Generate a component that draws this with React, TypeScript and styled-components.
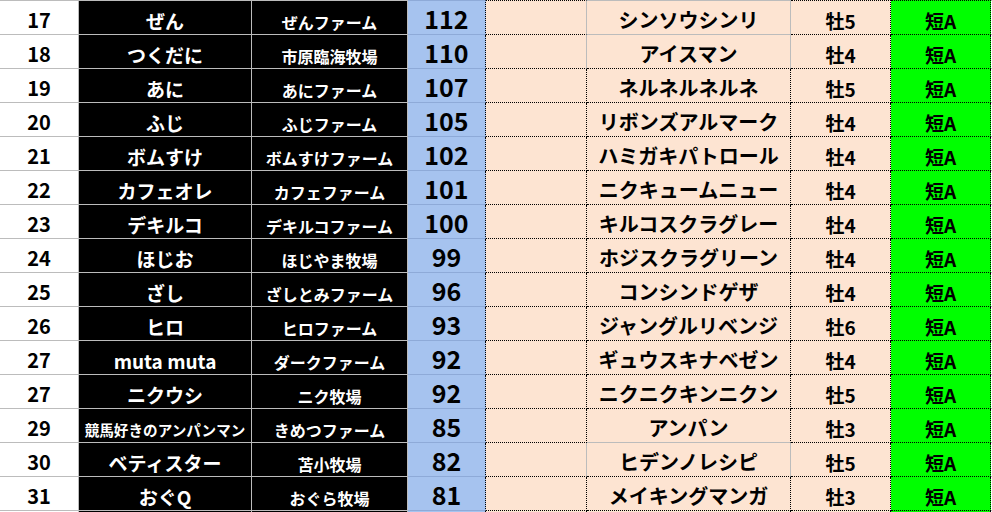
import styled, { createGlobalStyle } from "styled-components";

const GlobalStyle = createGlobalStyle`
    html, body {
        margin:0;
        padding:0;
        overflow:hidden;
        background:#ffffff;
    }
    body {
        font-family:"Noto Sans CJK JP", "Noto Sans", sans-serif;
    }
`

const GRID = "#bcbcbc";
const BLUE_LINE = "#8eaad8";
const DOT = "1px dotted #000000";
const PEACH = "#fde4d2";

const Sheet = styled.div`
    width:992px;
    display:flex;
    flex-direction:column;
`

const Row = styled.div<{ $h: number }>`
    display:grid;
    grid-template-columns:79px 173px 156px 78px 101px 204px 100px 100px 1fr;
    height:${(p) => p.$h}px;
    overflow:hidden;
`

type CellProps = {
    $bg: string;
    $fg?: string;
    $size: number;
    $right: string;
    $bottom: string;
    $top?: string;
    $pad?: number;
};

const Cell = styled.div<CellProps>`
    box-sizing:border-box;
    display:flex;
    align-items:flex-end;
    justify-content:center;
    padding-bottom:${(p) => (p.$pad ?? 4)}px;
    overflow:hidden;
    white-space:nowrap;
    background:${(p) => p.$bg};
    color:${(p) => p.$fg || "#000000"};
    font-size:${(p) => p.$size}px;
    font-weight:700;
    line-height:1;
    border-right:${(p) => p.$right};
    border-bottom:${(p) => p.$bottom};
    border-top:${(p) => p.$top || "none"};
`

type Entry = {
    rank: number;
    name: string;
    farm: string;
    score: number;
    horse: string;
    sex: string;
    small?: boolean;
    plain?: boolean;
};

const rows: Entry[] = [
    { rank: 17, name: "ぜん", farm: "ぜんファーム", score: 112, horse: "シンソウシンリ", sex: "牡5", plain: true },
    { rank: 18, name: "つくだに", farm: "市原臨海牧場", score: 110, horse: "アイスマン", sex: "牡4", plain: true },
    { rank: 19, name: "あに", farm: "あにファーム", score: 107, horse: "ネルネルネルネ", sex: "牡5" },
    { rank: 20, name: "ふじ", farm: "ふじファーム", score: 105, horse: "リボンズアルマーク", sex: "牡4" },
    { rank: 21, name: "ボムすけ", farm: "ボムすけファーム", score: 102, horse: "ハミガキパトロール", sex: "牡4" },
    { rank: 22, name: "カフェオレ", farm: "カフェファーム", score: 101, horse: "ニクキュームニュー", sex: "牡4" },
    { rank: 23, name: "デキルコ", farm: "デキルコファーム", score: 100, horse: "キルコスクラグレー", sex: "牡4" },
    { rank: 24, name: "ほじお", farm: "ほじやま牧場", score: 99, horse: "ホジスクラグリーン", sex: "牡4" },
    { rank: 25, name: "ざし", farm: "ざしとみファーム", score: 96, horse: "コンシンドゲザ", sex: "牡4" },
    { rank: 26, name: "ヒロ", farm: "ヒロファーム", score: 93, horse: "ジャングルリベンジ", sex: "牡6" },
    { rank: 27, name: "muta muta", farm: "ダークファーム", score: 92, horse: "ギュウスキナベゼン", sex: "牡4" },
    { rank: 27, name: "ニクウシ", farm: "ニク牧場", score: 92, horse: "ニクニクキンニクン", sex: "牡5" },
    { rank: 29, name: "競馬好きのアンパンマン", farm: "きめつファーム", score: 85, horse: "アンパン", sex: "牡3", small: true },
    { rank: 30, name: "ベティスター", farm: "苫小牧場", score: 82, horse: "ヒデンノレシピ", sex: "牡5", plain: true },
    { rank: 31, name: "おぐQ", farm: "おぐら牧場", score: 81, horse: "メイキングマンガ", sex: "牡3" },
];

const grayLine = `1px solid ${GRID}`;
const blueLine = `1px solid ${BLUE_LINE}`;

const RankingRow = ({ e, next, first, filler }: { e?: Entry; next?: Entry; first: boolean; filler?: boolean }) => {
    // dotted frame on the horse cell belongs to its own top edge, so the
    // bottom line is taken from the row below
    const dotted = e ? !e.plain : true;
    const horseBottom = !next ? (dotted ? DOT : grayLine) : next.plain ? grayLine : DOT;
    const pick = (b: string) => (filler ? "none" : b);
    const top = (b: string) => (first ? b : undefined);
    return (
        <Row $h={filler ? 1 : first ? 35 : 34}>
            <Cell $bg="#ffffff" $size={20} $right={grayLine} $bottom={pick(grayLine)} $top={top(grayLine)}>
                {e?.rank}
            </Cell>
            <Cell $bg="#000000" $fg="#ffffff" $size={e?.small ? 14.6 : 19} $right={grayLine} $bottom={pick(grayLine)} $top={top(grayLine)}>
                {e?.name}
            </Cell>
            <Cell $bg="#000000" $fg="#ffffff" $size={16} $right={grayLine} $bottom={pick(grayLine)} $top={top(grayLine)}>
                {e?.farm}
            </Cell>
            <Cell $bg="#a6c3ef" $size={25} $pad={3} $right={DOT} $bottom={pick(blueLine)} $top={top(blueLine)}>
                {e?.score}
            </Cell>
            <Cell $bg={PEACH} $size={19} $right={dotted ? DOT : grayLine} $bottom={pick(DOT)} $top={top(DOT)} />
            <Cell $bg={PEACH} $size={20} $right={dotted ? DOT : grayLine} $bottom={pick(horseBottom)} $top={top(dotted ? DOT : grayLine)}>
                {e?.horse}
            </Cell>
            <Cell $bg={PEACH} $size={19} $right={DOT} $bottom={pick(DOT)} $top={top(DOT)}>
                {e?.sex}
            </Cell>
            <Cell $bg="#00ff00" $size={19} $right={DOT} $bottom={pick(DOT)} $top={top(DOT)}>
                {e && "短A"}
            </Cell>
            <Cell $bg="#ffffff" $size={19} $right="none" $bottom={pick(grayLine)} $top={top(grayLine)} />
        </Row>
    );
};

export default function App() {
    return (
        <>
            <GlobalStyle />
            <Sheet>
                {rows.map((e, i) => (
                    <RankingRow key={i} e={e} next={rows[i + 1]} first={i === 0} />
                ))}
                <RankingRow first={false} filler />
            </Sheet>
        </>
    );
}
